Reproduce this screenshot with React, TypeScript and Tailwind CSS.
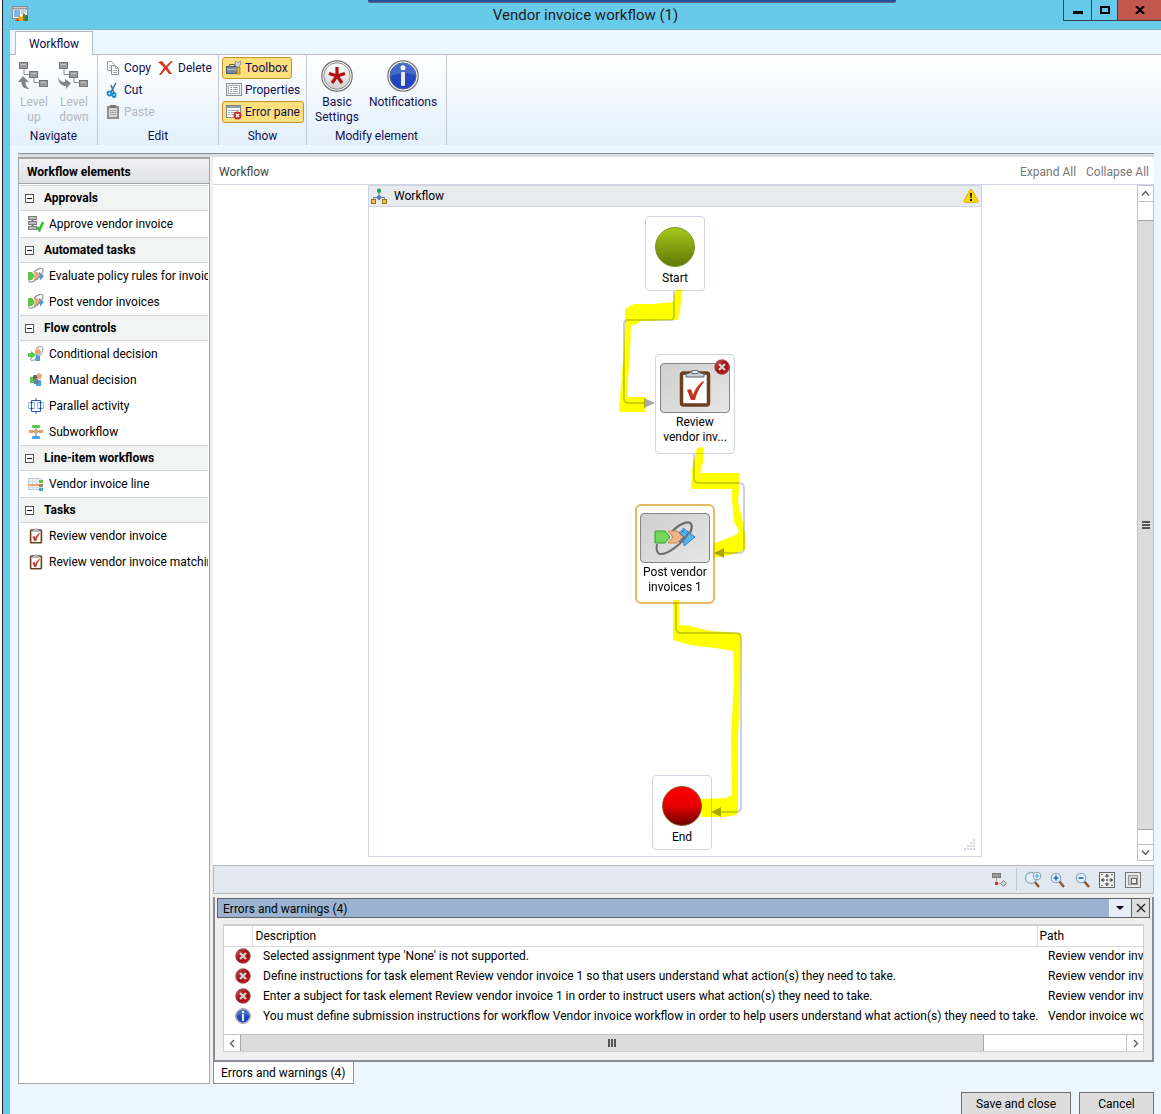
import type { ReactNode } from "react";

/* ---------- Icons ---------- */

function AppIcon() {
    return (
        <svg width="16" height="16" viewBox="0 0 16 16">
            <rect x="0.500" y="0.500" width="15" height="12" fill="#f4f4f4" stroke="#8c8c8c" />
            <path d="M1 2.500h14" stroke="#9b9b9b" strokeWidth="2" />
            <rect x="2" y="4" width="6" height="7" fill="#7db4ea" />
            <path d="M9 5h5M9 7h3" stroke="#8aa6c4" />
            <path d="M3 15l4-5 3 1 2-6 1 10z" fill="#f5a81c" />
            <path d="M11 8h2v7h-2z" fill="#4b8e3f" />
            <path d="M13 9h3v6h-3z" fill="#3f7a3c" />
            <path d="M3 15l3-3 1 3z" fill="#d5421f" />
        </svg>
    );
}

function LevelIcon({ down = false }: { down?: boolean }) {
    return (
        <svg width="32" height="32" viewBox="0 0 32 32">
            <path d="M6 8v6.500h5M16 16v6.500h5" fill="none" stroke="#8f8f8f" />
            <g fill="#9a9a9a" stroke="#777">
                <rect x="1.500" y="2.500" width="8" height="6" />
                <rect x="11.500" y="11.500" width="8" height="6" />
                <rect x="21.500" y="20.500" width="8" height="6" />
            </g>
            <path d="M3 4.500h5M13 13.500h5M23 22.500h5" stroke="#c4c4c4" />
            {down ? (
                <path d="M0 16c1 4 3 6 7 6v-3l6 4-5 6v-3c-5 0-8-4-8-10z" fill="#858585" />
            ) : (
                <path d="M5 16l6 6H7.500c0 3 1 5 4 7-5 0-8-2-8-7H0z" fill="#858585" />
            )}
        </svg>
    );
}

function CopyIcon() {
    return (
        <svg width="14" height="16" viewBox="0 0 14 16">
            <path d="M1.500 1.500h4l3 3v6h-7z" fill="#fff" stroke="#9aa0aa" />
            <path d="M3 5.500h4M3 7.500h4" stroke="#b3b9c4" />
            <path d="M5.500 5.500h4l3 3v6h-7z" fill="#fff" stroke="#8a919d" />
            <path d="M9.500 5.500v3h3M7 10.500h4M7 12.500h4" fill="none" stroke="#a2a9b5" />
        </svg>
    );
}

function CutIcon() {
    return (
        <svg width="14" height="16" viewBox="0 0 14 16">
            <path d="M10 1L5 10M5 3l3 8" stroke="#4a6a88" strokeWidth="1.500" />
            <ellipse cx="3.500" cy="11.500" rx="2" ry="2" fill="none" stroke="#1687d4" strokeWidth="1.800" />
            <ellipse cx="8" cy="13" rx="1.600" ry="2" fill="none" stroke="#1687d4" strokeWidth="1.800" />
        </svg>
    );
}

function PasteIcon() {
    return (
        <svg width="14" height="16" viewBox="0 0 14 16">
            <rect x="1" y="2" width="12" height="13" fill="#8f8f8f" />
            <rect x="3" y="4" width="8" height="9" fill="#d6d6d6" />
            <path d="M4 1h6v3H4z" fill="#777" />
            <path d="M4 6.500h6M4 8.500h6M4 10.500h6" stroke="#a5a5a5" />
        </svg>
    );
}

function DeleteIcon() {
    return (
        <svg width="16" height="16" viewBox="0 0 16 16">
            <path d="M0 2l4-1 4 5 5-5h2L9.500 7.500 14 14h-3L7.500 9.500 3 15H1l5-7.500z" fill="#d43a22" />
        </svg>
    );
}

function ToolboxIcon() {
    return (
        <svg width="16" height="16" viewBox="0 0 16 16">
            <path d="M3.500 6V4.500h5V6" fill="none" stroke="#5a6470" />
            <rect x="0.500" y="6.500" width="11" height="7" fill="#76879a" stroke="#4d5a68" />
            <path d="M1 9.500h10" stroke="#b8c3cf" />
            <path d="M11 7h3v7h-3z" fill="#f1b61c" stroke="#8c6a12" strokeWidth=".6" />
            <path d="M10 1l2 2 2-2 1 2-2 4h-2L9 4z" fill="#d5d9de" stroke="#6f7882" strokeWidth=".7" />
        </svg>
    );
}

function PropertiesIcon() {
    return (
        <svg width="16" height="16" viewBox="0 0 16 16">
            <rect x="0.500" y="1.500" width="15" height="12" fill="#eef0f3" stroke="#8b919b" />
            <rect x="2.500" y="3.500" width="11" height="8" fill="#fff" stroke="#a7adb8" />
            <path d="M4 5.500h2M7 5.500h5M4 7.500h2M7 7.500h5M4 9.500h2M7 9.500h5" stroke="#9ba4b3" />
        </svg>
    );
}

function ErrorPaneIcon() {
    return (
        <svg width="16" height="16" viewBox="0 0 16 16">
            <rect x="0.500" y="1.500" width="14" height="12" fill="#fff" stroke="#7e8590" />
            <path d="M1 3h13" stroke="#8fa0b5" strokeWidth="2" />
            <path d="M2 6.500h2M5 6.500h8M2 8.500h2M5 8.500h6M2 10.500h2M5 10.500h3" stroke="#9ba4b3" />
            <circle cx="11.500" cy="11.500" r="4" fill="#c92b2b" />
            <path d="M10 10l3 3M13 10l-3 3" stroke="#fff" strokeWidth="1.400" />
        </svg>
    );
}

function SettingsIcon() {
    return (
        <svg width="32" height="32" viewBox="0 0 32 32">
            <defs>
                <linearGradient id="silver" x1="0" y1="0" x2="0" y2="1">
                    <stop offset="0" stopColor="#ffffff" />
                    <stop offset="1" stopColor="#cfcfcf" />
                </linearGradient>
            </defs>
            <circle cx="16" cy="16" r="15.200" fill="#fff" stroke="#6f6f6f" strokeWidth="1.200" />
            <circle cx="16" cy="16" r="13.200" fill="url(#silver)" stroke="#8b8b8b" />
            <path d="M16 16V7M16 16l8-2.600M16 16l5 7M16 16l-5 7M16 16l-8-2.600" stroke="#b50d12" strokeWidth="3.200" />
        </svg>
    );
}

function InfoIcon({ size }: { size: number }) {
    return (
        <svg width={size} height={size} viewBox="0 0 32 32" className="shrink-0">
            <defs>
                <linearGradient id="infoBlue" x1="0" y1="0" x2="0" y2="1">
                    <stop offset="0" stopColor="#2a55b8" />
                    <stop offset="1" stopColor="#1c3fc4" />
                </linearGradient>
            </defs>
            <circle cx="16" cy="16" r="15.200" fill="#f3f3f3" stroke="#777" strokeWidth="1.200" />
            <circle cx="16" cy="16" r="13" fill="url(#infoBlue)" stroke="#4a5c8c" />
            <path d="M3.500 16a12.500 12.500 0 0 1 25 -1C20 12 10 13 3.500 16z" fill="#6f95de" opacity=".4" />
            <circle cx="16" cy="7.800" r="2.500" fill="#fff" />
            <rect x="14" y="12" width="4" height="14" rx="1" fill="#e9e9ee" />
        </svg>
    );
}

function ErrorIcon() {
    return (
        <svg width="16" height="16" viewBox="0 0 16 16" className="shrink-0">
            <defs>
                <linearGradient id="errRed" x1="0" y1="0" x2="1" y2="1">
                    <stop offset="0" stopColor="#cf5a55" />
                    <stop offset="0.500" stopColor="#a00d12" />
                    <stop offset="1" stopColor="#cc1c1c" />
                </linearGradient>
            </defs>
            <circle cx="8" cy="8" r="7.300" fill="url(#errRed)" stroke="#8d4a4a" strokeWidth=".8" />
            <path d="M5 5l6 6M11 5l-6 6" stroke="#d2d2d2" strokeWidth="2.400" />
        </svg>
    );
}

function ApproveIcon() {
    return (
        <svg width="16" height="16" viewBox="0 0 16 16">
            <path d="M4.500 2v12" stroke="#6b6b6b" strokeWidth="2" />
            <g fill="#bcbcbc" stroke="#7d7d7d">
                <rect x="0.500" y="0.500" width="8" height="3" />
                <rect x="0.500" y="5.500" width="8" height="3" />
                <rect x="0.500" y="10.500" width="8" height="3" />
            </g>
            <path d="M9 11l2.500 3L15 6" fill="none" stroke="#2fc02b" strokeWidth="2.600" />
        </svg>
    );
}

function ProcessIcon() {
    return (
        <svg width="16" height="16" viewBox="0 0 16 16">
            <path d="M0 4h4l3 4-3 4H0z" fill="#5cc646" />
            <path d="M11 4l5 4-4 4.500V10h-2l1-2-1-2h1z" fill="#3b9ce0" />
            <path d="M5.500 4h4l3 4-3 4h-4L7.500 8z" fill="#eaa678" />
            <path d="M6 4c4-4 9-5 9-2 0 4-7 11-11 12-3 1-4-1-2-4" fill="none" stroke="#8d9196" strokeWidth="1.100" />
        </svg>
    );
}

function ConditionalIcon() {
    return (
        <svg width="16" height="16" viewBox="0 0 16 16">
            <path d="M7 4l3-2 3 3-1 4-5-1z" fill="#eaa678" />
            <path d="M8 8l4 2v5H7z" fill="#3fa5e6" />
            <path d="M0 7h3V5l5 4-5 4v-2H0z" fill="#5cc646" />
            <path d="M8 2c4-2 7-2 7 1 0 4-5 10-9 11-3 1-4 0-4-2" fill="none" stroke="#8d9196" />
        </svg>
    );
}

function ManualIcon() {
    return (
        <svg width="16" height="16" viewBox="0 0 16 16">
            <path d="M8 3l3-2 3 2-1 4H9z" fill="#eaa678" />
            <path d="M8 8h5v6H8z" fill="#3fa5e6" />
            <path d="M2 5h4v6H2z" fill="#5cc646" />
            <circle cx="7" cy="5" r="2.200" fill="#6b6258" />
            <path d="M5 7h5l1 5H6z" fill="#6b7f93" />
        </svg>
    );
}

function ParallelIcon() {
    return (
        <svg width="16" height="16" viewBox="0 0 16 16">
            <g fill="#e6f3fb" stroke="#9cc4dc">
                <rect x="0.500" y="4.500" width="6" height="6" />
                <rect x="9.500" y="4.500" width="6" height="6" />
            </g>
            <path d="M3.500 2.500v11M12.500 2.500v11M3.500 2.500h9M3.500 13.500h9M8 0v2M8 14v2" fill="none" stroke="#2f55c0" />
            <path d="M2 4h3L3.500 6zM11 4h3l-1.500 2zM2 10h3l-1.500 2zM11 10h3l-1.500 2z" fill="#2a3f9d" />
        </svg>
    );
}

function SubworkflowIcon() {
    return (
        <svg width="16" height="16" viewBox="0 0 16 16">
            <path d="M8 4v8M2 7.500h12" stroke="#8c7b6b" />
            <rect x="4" y="1" width="8" height="3" rx="1" fill="#5cc646" />
            <rect x="1" y="6" width="4" height="3" fill="#e59c66" />
            <rect x="6" y="6" width="4" height="3" fill="#e59c66" />
            <rect x="11" y="6" width="4" height="3" fill="#e59c66" />
            <rect x="4" y="12" width="8" height="3" rx="1" fill="#3fa5e6" />
        </svg>
    );
}

function LineItemIcon() {
    return (
        <svg width="16" height="16" viewBox="0 0 16 16">
            <rect x="0.500" y="2.500" width="13" height="11" fill="#f3f6f9" stroke="#c2cad3" />
            <path d="M1 5.500h12M1 11.500h12M4.500 3v10M8.500 3v10" stroke="#d6dde4" />
            <path d="M0 9h12" stroke="#eaa678" strokeWidth="2" />
            <rect x="11" y="4" width="4" height="3" fill="#5cc646" />
            <rect x="11" y="8" width="4" height="3" fill="#b0805a" />
            <rect x="11" y="12" width="4" height="3" fill="#3fa5e6" />
        </svg>
    );
}

function ClipboardIcon({ large = false }: { large?: boolean }) {
    return (
        <svg width={large ? 32 : 14} height={large ? 40 : 16} viewBox="0 0 32 40">
            <rect x="2.500" y="5" width="27" height="32" rx="2" fill="#fff" stroke="#6b3f1e" strokeWidth={large ? 3.500 : 4} />
            <path d="M7 9V6c3-1 5-1 5.500-3h7c.5 2 2.500 2 5.500 3v3z" fill="#c9ced2" stroke="#5d6266" />
            <path d="M13 2.500h6v3h-6z" fill="#eee" stroke="#6b6f73" />
            <path d="M8 22l4-1 2 6c2-6 5-10 10-14l1 1c-5 6-7 11-9 18h-4z" fill="#c8301f" stroke="#c8301f" strokeWidth={large ? 0 : 1.500} />
        </svg>
    );
}

function WorkflowIcon() {
    return (
        <svg width="16" height="16" viewBox="0 0 16 16">
            <path d="M8 4v5M2.500 12V9.500h11V12" fill="none" stroke="#6d7a90" />
            <circle cx="8" cy="2.700" r="2.200" fill="#2da457" />
            <path d="M8 6.500l3 3-3 3-3-3z" fill="#5c7ac0" />
            <rect x="0.500" y="11.500" width="4" height="4" fill="#f0c24b" stroke="#9a7414" />
            <rect x="11.500" y="11.500" width="4" height="4" fill="#f0c24b" stroke="#9a7414" />
        </svg>
    );
}

function WarningIcon() {
    return (
        <svg width="16" height="16" viewBox="0 0 16 16">
            <path d="M8 1.500c.7 0 1.200.4 1.500 1l5.400 10c.5 1 0 2-1.200 2H2.300c-1.200 0-1.700-1-1.200-2l5.400-10c.3-.6.800-1 1.500-1z" fill="#ffd800" stroke="#d9a400" strokeWidth=".8" />
            <path d="M7 5h2l-.4 5H7.400z" fill="#111" />
            <rect x="7" y="11" width="2" height="2" fill="#111" />
        </svg>
    );
}

function PostIcon() {
    return (
        <svg width="44" height="42" viewBox="0 0 44 42">
            <path d="M18 16c7-9 18-13 20-9 2 2 0 7-2 11" fill="none" stroke="#6e6e6e" strokeWidth="2.400" />
            <path d="M28 13l2 2v-4l12 9-11 9v-4h-5l5-5-5-5h5z" fill="#56b4f4" stroke="#2b82cf" />
            <path d="M15 14h9l6 6-6 6h-9l5-6z" fill="#efb389" stroke="#cf8450" />
            <path d="M2 14h10l5 6-5 6H2z" fill="#75d65e" stroke="#35a02a" />
            <path d="M4 27c-1 5-1 9 3 10 8 1 24-12 29-22" fill="none" stroke="#6e6e6e" strokeWidth="2" />
        </svg>
    );
}

function Magnifier({ kind }: { kind: "area" | "in" | "out" }) {
    return (
        <svg width="18" height="18" viewBox="0 0 18 18">
            <path d="M10 10l5 6" stroke="#8b5426" strokeWidth="2.400" />
            <circle cx="7" cy="7" r={kind === "area" ? 5.500 : 4.700} fill="#e4f1fc" stroke="#8fa9c9" strokeWidth="1.300" />
            {kind === "in" && <path d="M7 4.500v5M4.500 7h5" stroke="#2164c8" strokeWidth="1.600" />}
            {kind === "out" && <path d="M4.500 7h5" stroke="#2164c8" strokeWidth="1.600" />}
            {kind === "area" && (
                <>
                    <circle cx="13" cy="5" r="3.800" fill="#f4fafe" stroke="#8c9aa8" />
                    <path d="M13 2.500v5M10.500 5h5" stroke="#38a7d6" strokeWidth="1.200" />
                </>
            )}
        </svg>
    );
}

function Chevron({ d }: { d: string }) {
    return (
        <svg width="9" height="9" viewBox="0 0 9 9">
            <path d={d} fill="none" stroke="#606060" strokeWidth="1.400" />
        </svg>
    );
}

/* ---------- Ribbon ---------- */

function RibbonGroup({ label, className, children }: { label: string; className: string; children: ReactNode }) {
    return (
        <section className={`flex flex-col shrink-0 border-r border-[#c3c8d2] ${className}`}>
            <div className="flex grow pt-[2px]">{children}</div>
            <h2 className="h-[18px] leading-[18px] text-center">{label}</h2>
        </section>
    );
}

function LargeButton({ icon, text, disabled = false, className }: { icon: ReactNode; text: string; disabled?: boolean; className: string }) {
    return (
        <button disabled={disabled} className={`flex flex-col items-center pt-[3px] leading-[15px] disabled:text-[#b4b8c0] ${className}`}>
            {icon}
            <span className="pt-[3px]">{text}</span>
        </button>
    );
}

function SmallButton({ icon, text, disabled = false }: { icon: ReactNode; text: string; disabled?: boolean }) {
    return (
        <button disabled={disabled} className="flex items-center gap-1 h-[22px] disabled:text-[#b4b8c0]">
            {icon}
            {text}
        </button>
    );
}

function ToggleButton({ icon, text, pressed = false }: { icon: ReactNode; text: string; pressed?: boolean }) {
    return (
        <button
            aria-pressed={pressed}
            className="flex items-center gap-[3px] h-[22px] px-[3px] border border-transparent rounded-[3px] whitespace-nowrap aria-pressed:border-[#c79432] aria-pressed:bg-[#fddf7c]"
        >
            {icon}
            {text}
        </button>
    );
}

function Ribbon() {
    return (
        <div className="flex h-[90px] bg-linear-to-b from-white to-[#e2f0fc] text-[#10104f]">
            <RibbonGroup label="Navigate" className="w-[88px]">
                <div className="flex pl-1">
                    <LargeButton icon={<LevelIcon />} text="Level up" disabled className="w-10 px-1" />
                    <LargeButton icon={<LevelIcon down />} text="Level down" disabled className="w-10 px-1" />
                </div>
            </RibbonGroup>
            <RibbonGroup label="Edit" className="w-[121px]">
                <div className="flex flex-col pl-2">
                    <div className="flex gap-[7px]">
                        <SmallButton icon={<CopyIcon />} text="Copy" />
                        <SmallButton icon={<DeleteIcon />} text="Delete" />
                    </div>
                    <SmallButton icon={<CutIcon />} text="Cut" />
                    <SmallButton icon={<PasteIcon />} text="Paste" disabled />
                </div>
            </RibbonGroup>
            <RibbonGroup label="Show" className="w-[88px]">
                <div className="flex flex-col items-start pl-[3px]">
                    <ToggleButton icon={<ToolboxIcon />} text="Toolbox" pressed />
                    <ToggleButton icon={<PropertiesIcon />} text="Properties" />
                    <ToggleButton icon={<ErrorPaneIcon />} text="Error pane" pressed />
                </div>
            </RibbonGroup>
            <RibbonGroup label="Modify element" className="w-[140px]">
                <LargeButton icon={<SettingsIcon />} text="Basic Settings" className="w-[60px]" />
                <LargeButton icon={<InfoIcon size={32} />} text="Notifications" className="w-[72px]" />
            </RibbonGroup>
        </div>
    );
}

/* ---------- Toolbox ---------- */

const toolbox = [
    { title: "Approvals", items: [{ icon: <ApproveIcon />, text: "Approve vendor invoice" }] },
    {
        title: "Automated tasks",
        items: [
            { icon: <ProcessIcon />, text: "Evaluate policy rules for invoices" },
            { icon: <ProcessIcon />, text: "Post vendor invoices" },
        ],
    },
    {
        title: "Flow controls",
        items: [
            { icon: <ConditionalIcon />, text: "Conditional decision" },
            { icon: <ManualIcon />, text: "Manual decision" },
            { icon: <ParallelIcon />, text: "Parallel activity" },
            { icon: <SubworkflowIcon />, text: "Subworkflow" },
        ],
    },
    { title: "Line-item workflows", items: [{ icon: <LineItemIcon />, text: "Vendor invoice line" }] },
    {
        title: "Tasks",
        items: [
            { icon: <ClipboardIcon />, text: "Review vendor invoice" },
            { icon: <ClipboardIcon />, text: "Review vendor invoice matching" },
        ],
    },
];

function Toolbox() {
    return (
        <aside className="w-[192px] shrink-0 bg-white border border-t-2 border-[#a3a5ab] overflow-hidden">
            <h2 className="h-[25px] pl-2 leading-[27px] font-bold bg-linear-to-b from-[#f1f1f4] to-[#dfe0e5] border-b border-[#a3a5ab] mb-px">
                Workflow elements
            </h2>
            {toolbox.map((group) => (
                <section key={group.title} className="pl-px pr-px">
                    <button className="flex items-center gap-[10px] w-full h-[26px] pl-[5px] font-bold bg-[#f2f4f4] border-y border-[#cfd2d6]">
                        <svg width="9" height="9" viewBox="0 0 9 9">
                            <rect x="0.500" y="0.500" width="8" height="8" fill="#fff" stroke="#555" />
                            <path d="M2 4.500h5" stroke="#111" />
                        </svg>
                        {group.title}
                    </button>
                    <ul>
                        {group.items.map((item) => (
                            <li key={item.text} className="flex items-center h-[26px] pl-2 overflow-hidden whitespace-nowrap">
                                <span className="flex justify-center w-4 mr-[5px] shrink-0">{item.icon}</span>
                                {item.text}
                            </li>
                        ))}
                    </ul>
                </section>
            ))}
        </aside>
    );
}

/* ---------- Canvas ---------- */

function Connectors() {
    return (
        <svg className="absolute left-0 top-0 mix-blend-multiply pointer-events-none" width="612" height="649" viewBox="369 207 612 649">
            <g fill="#ffff00">
                <path d="M675 291l6-2v14l-3 17-37 1-4 3-6 1-1 25-2 30v17h17v15h-26l1-15 4-47 1-28v-13l9-5 18 0 21-2z" />
                <path d="M697 448l6-1v15l-3 11 39 0v17l-1 12 5 20 2 13v14l-5 3-10 3-17 3v-14l12-5 11-4 3-4-5-9-2-22v-11h-41l1-19z" />
                <path d="M673 600h6v25l11 1 20 5 31 2-1 67-2 35v45l0 32-2 3-11 2h-23l-1-18 25-1 6-3-1-55 3-60-1-29-18-3-25-3-17-5z" />
            </g>
            <g fill="none" stroke="#ccd0df" strokeWidth="2" className="mix-blend-multiply">
                <path d="M674 291v25q0 4-4 4h-42q-4 0-4 4v74q0 5 5 5h15" />
                <path d="M694 454v24q0 5 5 5h40q5 0 5 5v60q0 5-5 5h-15" />
                <path d="M676 603v25q0 5 5 5h55q5 0 5 5v169q0 5-5 5h-15" />
            </g>
            <g fill="#a8a8a8" className="mix-blend-multiply">
                <path d="M644 398l11 5-11 5z" />
                <path d="M724 548l-10 5 10 5z" />
                <path d="M721 807l-10 5 10 5z" />
            </g>
        </svg>
    );
}

function Terminal({ text, ball, className }: { text: string; ball: string; className: string }) {
    return (
        <div className={`absolute flex flex-col items-center w-[60px] h-[75px] pt-[10px] bg-white border border-[#d0d5e3] rounded-[4px] leading-[15px] ${className}`}>
            <span className={`size-10 mb-1 rounded-full border bg-linear-to-b ${ball}`}></span>
            {text}
        </div>
    );
}

function Task({ icon, lines, className, badge }: { icon: ReactNode; lines: string[]; className: string; badge?: ReactNode }) {
    return (
        <div className={`absolute flex flex-col items-center w-[80px] h-[100px] bg-white leading-[15px] whitespace-nowrap ${className}`}>
            <div className="flex items-center justify-center w-[70px] h-[50px] mb-[2px] border border-[#858585] rounded-[4px] bg-linear-to-br from-[#cfcfcf] to-[#e6e6e6]">
                {icon}
            </div>
            {lines.map((line) => (
                <span key={line}>{line}</span>
            ))}
            {badge}
        </div>
    );
}

function Canvas() {
    return (
        <div className="flex grow min-h-0 pb-1 bg-white">
            <div className="flex grow justify-center pb-1">
                <div className="flex flex-col w-[614px] border border-[#d0d5e3]">
                    <div className="flex items-center h-[21px] px-[2px] bg-[#e8ebee] border-b border-[#d0d5e3]">
                        <WorkflowIcon />
                        <span className="grow pl-[7px]">Workflow</span>
                        <WarningIcon />
                    </div>
                    <div className="relative grow isolate">
                        <Terminal text="Start" ball="from-[#a5c91b] to-[#5f7a08] border-[#7c961c]" className="left-[276px] top-[9px]" />
                        <Task
                            icon={<ClipboardIcon large />}
                            lines={["Review", "vendor inv..."]}
                            className="left-[286px] top-[147px] pt-[8px] border border-[#d0d5e3] rounded-[4px]"
                            badge={<span className="absolute right-[4px] top-[4px]"><ErrorIcon /></span>}
                        />
                        <Task
                            icon={<PostIcon />}
                            lines={["Post vendor", "invoices 1"]}
                            className="left-[266px] top-[297px] pt-[7px] border-2 border-[#e5b95e] rounded-[6px]"
                        />
                        <Terminal text="End" ball="from-[#ff0000] via-[#e80000] to-[#6d0000] border-[#8a5a1c]" className="left-[283px] top-[568px]" />
                        <Connectors />
                        <svg className="absolute right-[5px] bottom-[5px]" width="12" height="12" viewBox="0 0 12 12">
                            <path
                                d="M9 0h2v2H9zM6 3h2v2H6zM9 3h2v2H9zM3 6h2v2H3zM6 6h2v2H6zM9 6h2v2H9zM0 9h2v2H0zM3 9h2v2H3zM6 9h2v2H6zM9 9h2v2H9z"
                                fill="#d3d5e4"
                            />
                        </svg>
                    </div>
                </div>
            </div>
            <div className="flex flex-col w-[17px] shrink-0 border border-[#c1c1c4]">
                <button aria-label="Scroll up" className="flex items-center justify-center h-4 border-b border-[#c1c1c4]">
                    <Chevron d="M1 6.500l3.500-4 3.500 4" />
                </button>
                <div className="grow flex flex-col pt-[18px] pb-[14px]">
                    <div className="grow flex flex-col items-center justify-center bg-[#dcdcdc] border-y border-[#a6a6a6]">
                        <svg width="8" height="8" viewBox="0 0 8 8">
                            <path d="M0 1h8M0 4h8M0 7h8" stroke="#555" strokeWidth="2" />
                        </svg>
                    </div>
                </div>
                <button aria-label="Scroll down" className="flex items-center justify-center h-4 border-t border-[#c1c1c4]">
                    <Chevron d="M1 2.500l3.500 4 3.500-4" />
                </button>
            </div>
        </div>
    );
}

function ZoomBar() {
    return (
        <div className="flex items-center justify-end h-[29px] shrink-0 pr-3 border border-[#b3b8be] bg-[#e1e8ef]">
            <button aria-label="Auto arrange" className="mr-2">
                <svg width="16" height="16" viewBox="0 0 16 16">
                    <rect x="0.500" y="1.500" width="8" height="4" fill="#999" stroke="#777" />
                    <path d="M4.500 6v5.500h4" fill="none" stroke="#c99" />
                    <rect x="3" y="10" width="3" height="3" fill="#d33" />
                    <path d="M11.500 8.500l3 3-3 3-3-3z" fill="#ccc" stroke="#888" />
                </svg>
            </button>
            <div className="w-px h-[23px] mr-[7px] bg-[#c0c8d0]"></div>
            <div className="flex items-center gap-[7px]">
                <button aria-label="Zoom to area"><Magnifier kind="area" /></button>
                <button aria-label="Zoom in"><Magnifier kind="in" /></button>
                <button aria-label="Zoom out"><Magnifier kind="out" /></button>
                <button aria-label="Fit to window">
                    <svg width="16" height="16" viewBox="0 0 16 16">
                        <rect x="0.500" y="0.500" width="15" height="15" fill="#f1f1f1" stroke="#666" />
                        <path d="M8 2v4M8 10v4M2 8h4M10 8h4" stroke="#666" />
                        <path d="M5.500 4.500L8 2l2.500 2.500zM5.500 11.500L8 14l2.500-2.500zM4.500 5.500L2 8l2.500 2.500zM11.500 5.500L14 8l-2.500 2.500z" fill="#555" />
                        <path d="M2 2h2v1H2zM12 2h2v1h-2zM2 13h2v1H2zM12 13h2v1h-2zM7 7h2v2H7z" fill="#777" />
                    </svg>
                </button>
                <button aria-label="Actual size" className="ml-[3px]">
                    <svg width="16" height="16" viewBox="0 0 16 16">
                        <rect x="0.500" y="0.500" width="15" height="15" fill="#e9e9e9" stroke="#777" />
                        <rect x="3.500" y="3.500" width="9" height="9" fill="#ccc" stroke="#999" />
                        <rect x="6.500" y="6.500" width="5" height="5" fill="#eee" stroke="#666" />
                    </svg>
                </button>
            </div>
        </div>
    );
}

/* ---------- Errors ---------- */

const errors = [
    { kind: "error", description: "Selected assignment type 'None' is not supported.", path: "Review vendor invoice 1" },
    {
        kind: "error",
        description: "Define instructions for task element Review vendor invoice 1 so that users understand what action(s) they need to take.",
        path: "Review vendor invoice 1",
    },
    {
        kind: "error",
        description: "Enter a subject for task element Review vendor invoice 1 in order to instruct users what action(s) they need to take.",
        path: "Review vendor invoice 1",
    },
    {
        kind: "info",
        description:
            "You must define submission instructions for workflow Vendor invoice workflow in order to help users understand what action(s) they need to take.",
        path: "Vendor invoice workflow",
    },
];

function ErrorsPanel() {
    return (
        <div className="shrink-0 px-[2px] pt-px border-x-2 border-b-2 border-[#8b8e99] bg-[#efefef]">
            <div className="flex h-[20px] border border-[#5f6369] bg-[#9ab3d1]">
                <h2 className="grow pl-[5px] leading-[20px]">Errors and warnings (4)</h2>
                <button aria-label="Panel options" className="flex items-center justify-center w-[22px] bg-[#e9effa]">
                    <svg width="8" height="4" viewBox="0 0 8 4">
                        <path d="M0 0h8L4 4z" fill="#000" />
                    </svg>
                </button>
                <button aria-label="Close panel" className="flex items-center justify-center w-[18px] bg-[#dedede] border-l border-[#5f6369]">
                    <svg width="10" height="10" viewBox="0 0 10 10">
                        <path d="M1 1l8 8M9 1L1 9" stroke="#222" strokeWidth="1.300" />
                    </svg>
                </button>
            </div>
            <div className="mx-[6px] mt-[6px] mb-[8px] border border-t-2 border-[#cfcfcf] bg-white">
                <div className="h-[108px] overflow-hidden">
                    <table className="w-full table-fixed border-collapse whitespace-nowrap text-left">
                        <thead>
                            <tr className="h-[20px] border-b border-[#dcdcdc]">
                                <th className="w-[28px] p-0 border-r border-[#dcdcdc]"></th>
                                <th className="p-0 pl-[3px] font-normal border-r border-[#dcdcdc]">Description</th>
                                <th className="w-[106px] p-0 pl-[2px] font-normal">Path</th>
                            </tr>
                        </thead>
                        <tbody>
                            {errors.map((row) => (
                                <tr key={row.description} className="h-5">
                                    <td className="p-0 pl-[11px]">{row.kind === "error" ? <ErrorIcon /> : <InfoIcon size={16} />}</td>
                                    <td className="p-0 pl-[11px]">{row.description}</td>
                                    <td className="p-0 pl-[11px] overflow-hidden">{row.path}</td>
                                </tr>
                            ))}
                        </tbody>
                    </table>
                </div>
                <div className="flex h-[17px] border-t border-[#c1c1c4]">
                    <button aria-label="Scroll left" className="flex items-center justify-center w-4">
                        <Chevron d="M6 1L2.500 4.500 6 8" />
                    </button>
                    <div className="grow flex">
                        <div className="flex items-center justify-center w-[84%] bg-[#dcdcdc] border-x border-[#a6a6a6]">
                            <svg width="8" height="8" viewBox="0 0 8 8">
                                <path d="M1 0v8M4 0v8M7 0v8" stroke="#555" strokeWidth="2" />
                            </svg>
                        </div>
                    </div>
                    <button aria-label="Scroll right" className="flex items-center justify-center w-[17px] border-l border-[#c1c1c4]">
                        <Chevron d="M3 1l3.500 3.500L3 8" />
                    </button>
                </div>
            </div>
        </div>
    );
}

/* ---------- Window ---------- */

function TitleBar() {
    return (
        <header className="relative flex h-[30px] shrink-0 bg-[#67caeb] border-b border-[#7fb5c9]">
            <div className="absolute left-[365px] right-[265px] top-0 h-[3px] bg-[#24509c] border-b border-[#5c6b7c] rounded-b-[2px]"></div>
            <div className="pl-[9px] pt-[6px]">
                <AppIcon />
            </div>
            <h1 className="grow pl-[80px] text-center text-[15px] leading-[30px] text-[#1c1c1c]">Vendor invoice workflow (1)</h1>
            <div className="flex h-[21px]">
                <button aria-label="Minimize" className="flex items-center justify-center w-7 border-l border-b border-[#2f4a55]">
                    <span className="w-[10px] h-[3px] mt-1 bg-black"></span>
                </button>
                <button aria-label="Maximize" className="flex items-center justify-center w-[26px] border-l border-b border-[#2f4a55]">
                    <span className="w-[10px] h-2 border-2 border-black"></span>
                </button>
                <button aria-label="Close" className="flex items-center justify-center w-11 border-l border-b border-[#5b3232] bg-[#c1584f]">
                    <svg width="10" height="8" viewBox="0 0 10 8">
                        <path d="M1 0l8 8M9 0L1 8" stroke="#000" strokeWidth="2.200" />
                    </svg>
                </button>
            </div>
        </header>
    );
}

export default function App() {
    return (
        <div className="flex h-screen overflow-hidden bg-[#ebf6ff] font-['Roboto','Open_Sans',sans-serif] text-xs text-black">
            <div className="w-[3px] shrink-0 bg-white border-r border-[#222]"></div>
            <div className="flex flex-col grow min-w-0">
                <TitleBar />
                <div className="flex grow min-h-0">
                    <div className="w-[7px] shrink-0 bg-[#67caeb]"></div>
                    <div className="flex flex-col grow min-w-0">
                        <nav className="flex h-[25px] shrink-0 pt-px pl-[5px] border-b border-[#b4b9c5]">
                            <button className="h-6 -mb-px px-[13px] bg-white border border-b-0 border-[#b4b9c5] text-[#10104f]">Workflow</button>
                        </nav>
                        <Ribbon />
                        <main className="flex grow min-h-0 mt-2 ml-2 mr-[7px] border-t border-[#8b8e99] bg-linear-to-b from-[#d9dde2] from-[3px] to-[#efefef] to-[3px] pt-[3px]">
                            <Toolbox />
                            <div className="flex flex-col grow min-w-0 ml-[3px]">
                                <div className="flex items-center h-[28px] shrink-0 pl-[6px] pr-[5px] pt-[2px] bg-white border-b border-[#d0d5e3] text-[#444]">
                                    <span className="grow">Workflow</span>
                                    <a href="#expand" className="mr-[10px] text-[#777]">Expand All</a>
                                    <a href="#collapse" className="text-[#777]">Collapse All</a>
                                </div>
                                <Canvas />
                                <ZoomBar />
                                <div className="h-[3px] shrink-0"></div>
                                <ErrorsPanel />
                                <div className="h-[22px] shrink-0 bg-[#ebf6ff]">
                                    <button className="h-[22px] px-[7px] bg-white border border-t-0 border-[#8b8e99]">Errors and warnings (4)</button>
                                </div>
                            </div>
                        </main>
                        <footer className="flex justify-end gap-2 h-[30px] shrink-0 pt-2 pr-[7px]">
                            <button className="w-[110px] border border-b-0 border-[#707070] bg-[#dddddd]">Save and close</button>
                            <button className="w-[75px] border border-b-0 border-[#707070] bg-[#dddddd]">Cancel</button>
                        </footer>
                    </div>
                </div>
            </div>
        </div>
    );
}
